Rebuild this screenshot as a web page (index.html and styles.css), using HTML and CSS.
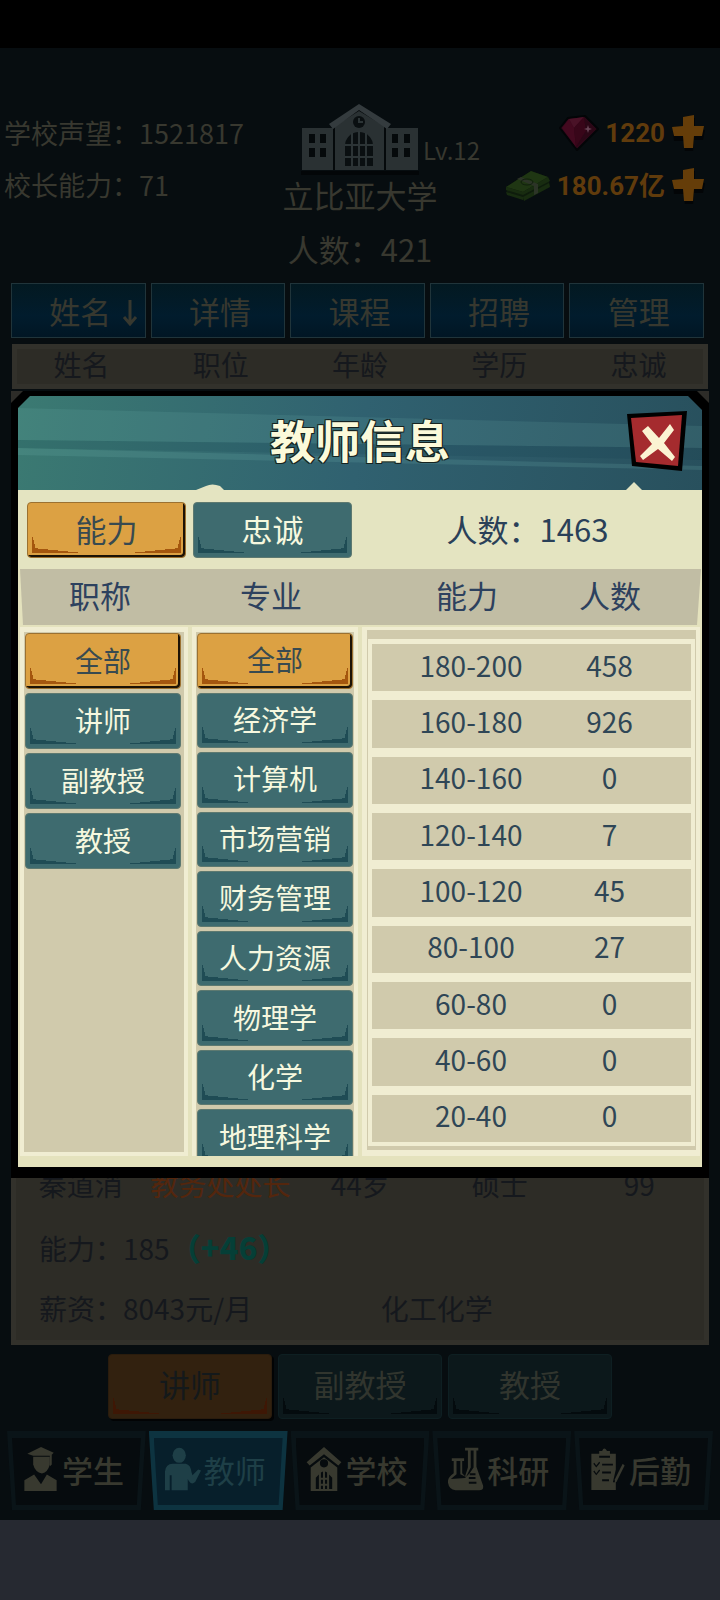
FILE: index.html
```html
<!DOCTYPE html>
<html lang="zh-CN">
<head>
    <meta charset="UTF-8">
    <meta name="viewport" content="width=device-width, initial-scale=1.0">
    <title>教师信息</title>
    <link rel="stylesheet" href="styles.css">
</head>
<body>

    <!-- shapes used more than once -->
    <svg class="defs" width="0" height="0" aria-hidden="true">
        <symbol id="plus" viewBox="0 0 34 36">
            <path d="M12 3l11-2 0 11 10 1-2 10-9 0-1 12-8 1-1-12-10 0-1-10 11-1z" fill="#030507" transform="translate(1 2)"/>
            <path d="M12 2l11-2 0 11 10 0-2 10-8 0-1 12-9 0-1-12-9 0-2-9 11-1z" fill="#653d09"/>
        </symbol>
    </svg>

    <div class="statusbar"></div>

    <div class="game">

        <header class="top">
            <div class="stats">
                <p>学校声望：1521817</p>
                <p>校长能力：71</p>
            </div>

            <div class="school">
                <svg class="building" viewBox="0 0 118 72">
                    <path d="M0 67h118v4H0z" fill="#030608"/>
                    <path d="M1 24h33v42H1zM84 24h33v42H84z" fill="#2a3133"/>
                    <path d="M32 20L58 3l27 17v46H32z" fill="#05090b"/>
                    <path d="M34 22L58 7l25 15v44H34z" fill="#2a3133"/>
                    <path d="M28 20L58 0l32 20-4 5L58 6 32 25z" fill="#343b3e"/>
                    <circle cx="58" cy="18" r="6" fill="#0a0f11"/>
                    <path d="M58 14v4h4" fill="none" stroke="#2c3436" stroke-width="2"/>
                    <path d="M44 62V42a14 14 0 0 1 28 0v20z" fill="#0a0f11"/>
                    <path d="M44 41h28M44 53h28M51 29v34M58 27v36M65 29v34" stroke="#2c3436" stroke-width="2"/>
                    <path d="M8 30h6v9H8zM19 30h6v9h-6zM8 44h6v9H8zM19 44h6v9h-6zM91 30h6v9h-6zM103 30h6v9h-6zM91 44h6v9h-6zM103 44h6v9h-6z" fill="#05090b"/>
                </svg>
                <span class="level">Lv.12</span>
                <h1>立比亚大学</h1>
            </div>

            <div class="money">
                <div class="money-row">
                    <svg class="gem" viewBox="0 0 40 36">
                        <path d="M1 13L9 3l17-2 13 13-21 21z" fill="#30081a" stroke="#030507" stroke-width="2"/>
                        <path d="M3 13l7-9 5 9zM15 13l2 19L3 13z" fill="#43091f"/>
                        <path d="M10 4l15-2-10 11z" fill="#4a1227"/>
                        <path d="M15 13l12 3-10 16zM25 2l2 14-12-3z" fill="#380619"/>
                        <path d="M27 16l10-2-20 18zM25 2l12 12-10 2z" fill="#2b0716"/>
                        <path d="M29 10l1 3 3 1-3 1-1 3-1-3-3-1 3-1z" fill="#684455"/>
                    </svg>
                    <span>1220</span>
                    <button class="add" aria-label="购买钻石"><svg viewBox="0 0 34 36"><use href="#plus"/></svg></button>
                </div>
                <div class="money-row">
                    <svg class="cash" viewBox="0 0 46 34">
                        <path d="M1 18L26 2l17 6 2 9-26 14L2 25z" fill="#0e1c0c"/>
                        <path d="M1 18L26 2l17 6-25 15z" fill="#1f3613"/>
                        <path d="M1 18l17 5v3L1 21zM1 23l17 5v3L2 26zM18 23L43 8l2 4-27 14zM18 28l26-14 1 4-26 14z" fill="#182c10"/>
                        <path d="M12 10l17 7v9l4-2v-9L16 8z" fill="#2c3427"/>
                        <ellipse cx="22" cy="13" rx="6" ry="3" fill="none" stroke="#101f0c"/>
                    </svg>
                    <span>180.67亿</span>
                    <button class="add" aria-label="购买资金"><svg viewBox="0 0 34 36"><use href="#plus"/></svg></button>
                </div>
            </div>
        </header>

        <p class="people">人数：421</p>

        <div class="tabs">
            <button>姓名<svg class="arrow" viewBox="0 0 16 28"><path d="M8 1v22M2 18l6 7 6-7" fill="none" stroke="currentColor" stroke-width="3"/></svg></button>
            <button>详情</button>
            <button>课程</button>
            <button>招聘</button>
            <button>管理</button>
        </div>

        <div class="list-head row">
            <span>姓名</span>
            <span>职位</span>
            <span>年龄</span>
            <span>学历</span>
            <span>忠诚</span>
        </div>

        <div class="dialog-wrap">
            <div class="dialog" role="dialog" aria-labelledby="dialog-title">

                <div class="dialog-head">
                    <svg class="stripes" viewBox="0 0 684 94" preserveAspectRatio="none">
                        <path d="M0 12L684 30v22L0 44z" fill="#7cc0b8" opacity=".13"/>
                        <path d="M0 44L684 52v12L0 52z" fill="#0c3044" opacity=".12"/>
                        <path d="M0 52L684 70v4L0 59z" fill="#7cc0b8" opacity=".16"/>
                        <path d="M178 94l10-4q6-3 14 0l4 4zM608 94l8-8 8 8z" fill="#e3e4c3"/>
                    </svg>
                    <h2 id="dialog-title">教师信息</h2>
                    <button class="close" aria-label="关闭">
                        <svg viewBox="0 0 62 62">
                            <path d="M1 3l60-3-5 60-50-5z" fill="#000"/>
                            <path d="M5 7l51-3-4 51-42-4z" fill="#a52b2e"/>
                            <path d="M16 20l6-5 11 12 11-14 4 6-10 13 11 14-3 4-14-12-15 11-3-4 12-12z" fill="#fbf3d2"/>
                        </svg>
                    </button>
                </div>

                <div class="switch">
                    <button class="btn active">能力</button>
                    <button class="btn">忠诚</button>
                    <p>人数：1463</p>
                </div>

                <div class="band">
                    <span>职称</span>
                    <span>专业</span>
                    <span>能力</span>
                    <span>人数</span>
                </div>

                <div class="panels">
                    <div class="panel">
                        <div class="options">
                            <button class="btn active">全部</button>
                            <button class="btn">讲师</button>
                            <button class="btn">副教授</button>
                            <button class="btn">教授</button>
                        </div>
                    </div>
                    <div class="panel">
                        <div class="options long">
                            <button class="btn active">全部</button>
                            <button class="btn">经济学</button>
                            <button class="btn">计算机</button>
                            <button class="btn">市场营销</button>
                            <button class="btn">财务管理</button>
                            <button class="btn">人力资源</button>
                            <button class="btn">物理学</button>
                            <button class="btn">化学</button>
                            <button class="btn">地理科学</button>
                        </div>
                    </div>
                    <div class="result">
                        <div class="result-frame">
                            <table aria-label="能力人数">
                                <tr><td>180-200</td><td>458</td></tr>
                                <tr><td>160-180</td><td>926</td></tr>
                                <tr><td>140-160</td><td>0</td></tr>
                                <tr><td>120-140</td><td>7</td></tr>
                                <tr><td>100-120</td><td>45</td></tr>
                                <tr><td>80-100</td><td>27</td></tr>
                                <tr><td>60-80</td><td>0</td></tr>
                                <tr><td>40-60</td><td>0</td></tr>
                                <tr><td>20-40</td><td>0</td></tr>
                            </table>
                        </div>
                    </div>
                </div>

            </div>
        </div>

        <div class="teacher">
            <div class="row">
                <span>秦道消</span>
                <span class="post">教务处处长</span>
                <span>44岁</span>
                <span>硕士</span>
                <span>99</span>
            </div>
            <p>能力：185<b>（+46）</b></p>
            <p class="pay"><span>薪资：8043元/月</span><span>化工化学</span></p>
        </div>

        <div class="ranks">
            <button class="btn active">讲师</button>
            <button class="btn">副教授</button>
            <button class="btn">教授</button>
        </div>

        <nav>
            <a href="#">
                <svg viewBox="0 0 36 46">
                    <path d="M18 0l13 6-2 2v10l-2 2V9H10l-6-2z"/>
                    <path d="M10 10h17v8q-2 8-8 9-7-1-9-9z"/>
                    <path d="M1 45V34l10-6 7 10 6-10 10 6v11z"/>
                </svg>学生
            </a>
            <a href="#" class="current">
                <svg viewBox="0 0 38 46">
                    <ellipse cx="15" cy="8" rx="7" ry="8"/>
                    <path d="M0 45V25q1-8 8-8h14q5 1 6 9l1 3 6-6 3 1-6 12q-4 4-7-1l-1-2v12H7V29H5v16z"/>
                </svg>教师
            </a>
            <a href="#">
                <svg viewBox="0 0 34 44">
                    <path d="M17 0l17 15-3 3-14-11L3 18l-3-3z"/>
                    <path fill-rule="evenodd" d="M4 20L17 10l13 10v23H4zM17 12a4 4 0 1 0 0 8 4 4 0 0 0 0-8zM9 30v11h3V27zM14 25v5h2v-6zM18 24v6h2v-5zM22 27v14h3V30zM14 32v4h2v-4zM18 32v4h2v-4zM14 38v3h2v-3zM18 38v3h2v-3z"/>
                </svg>学校
            </a>
            <a href="#">
                <svg viewBox="0 0 38 46">
                    <path fill-rule="evenodd" d="M18 0h14v3h-2v17l7 20q1 5-4 5H8q-7-1-8-8-1-5 6-10V14H4v-3h13v3h-2v13l3 3 3-9V3h-3zM24 3v18l-5 10-6-3V14H9v14l-6 5 15-1q5-4 9-11V3zM23 27v2h6v-2zM22 31v2h7v-2zM22 36v2h8v-2z"/>
                </svg>科研
            </a>
            <a href="#">
                <svg viewBox="0 0 36 46">
                    <path fill-rule="evenodd" d="M1 7h8V4h3q2-5 5 0h3v3h6v16l-3 13h3v8H1zM9 9v2h11V9zM12 17v2h11v-2zM12 25v2h9v-2zM12 33v2h7v-2zM3 17l3 4 4-5-1-1-3 4-2-3zM3 25l3 4 4-5-1-1-3 4-2-3z"/>
                    <path d="M33 17l2 2-8 16-2 2v-4z"/>
                </svg>后勤
            </a>
        </nav>

    </div>

</body>
</html>
```

FILE: styles.css
```css
* {
    margin: 0;
    padding: 0;
    box-sizing: border-box;
}
body {
    min-height: 100vh;
    background-color: #262931;
    font-family: "Noto Sans CJK SC", sans-serif;
    font-size: 28px;
    color: #38382f;
}
button {
    border: none;
    background: none;
    font: inherit;
    color: inherit;
    cursor: pointer;
}
svg {
    display: block;
}
.defs {
    position: absolute;
}
.statusbar {
    height: 48px;
    background-color: #000;
}
.game {
    padding-bottom: 10px;
    background-color: #070d10;
}

/* school header */
.top {
    display: grid;
    grid-template-columns: 1fr 160px 1fr;
    height: 174px;
    padding-top: 56px;
}
.stats {
    padding: 3px 0 0 4px;
    font-size: 27px;
    line-height: 52px;
    white-space: nowrap;
}
.school {
    position: relative;
    display: flex;
    flex-direction: column;
    align-items: center;
}
.building {
    width: 118px;
    height: 72px;
}
.level {
    position: absolute;
    left: 143px;
    top: 30px;
    font-size: 24px;
    line-height: 32px;
}
.school h1 {
    font-size: 31px;
    font-weight: 400;
    line-height: 38px;
}
.money {
    padding: 2px 15px 0 0;
    font-family: Roboto, "Noto Sans CJK SC", sans-serif;
    font-size: 26px;
    font-weight: 700;
    line-height: 52px;
    color: #603b0c;
}
.money-row {
    display: flex;
    align-items: center;
    justify-content: flex-end;
    gap: 6px;
    height: 53px;
}
.gem {
    width: 40px;
    height: 36px;
}
.cash {
    width: 46px;
    height: 34px;
}
.add svg {
    width: 34px;
    height: 36px;
}
.people {
    height: 61px;
    font-size: 31px;
    line-height: 54px;
    text-align: center;
}

/* list behind the dialog */
.tabs {
    display: flex;
    gap: 5px;
    margin: 0 16px 6px 11px;
}
.tabs button {
    position: relative;
    flex: 1;
    height: 55px;
    padding-left: 4px;
    border: 1px solid #20343a;
    background-image: linear-gradient(#031921, #011c2d 60%, #011624);
    font-size: 31px;
    line-height: 52px;
    color: #37382f;
}
.arrow {
    position: absolute;
    right: 7px;
    top: 15px;
    width: 16px;
    height: 28px;
}
.row {
    display: grid;
    grid-template-columns: repeat(5, 1fr);
    text-align: center;
    white-space: nowrap;
}
.list-head,
.teacher {
    background-color: #2d2c26;
    box-shadow: inset 0 0 0 5px #32312b;
    color: #15181d;
}
.list-head {
    height: 45px;
    margin: 0 12px;
    line-height: 41px;
}

/* first line of the card slides under the dialog */
.teacher {
    margin: -16px 11px 0;
    padding-bottom: 7px;
    line-height: 60px;
}
.teacher .row {
    padding-top: 2px;
    line-height: 40px;
    margin-bottom: 13px;
}
.teacher .post {
    color: #54260d;
}
.teacher p {
    padding-left: 28px;
}
.teacher b {
    font-size: 31px;
    font-weight: 900;
    color: #053f37;
}
.pay {
    display: grid;
    grid-template-columns: 51% 49%;
}

/* buttons */
.btn {
    --face: #3e6b6f;
    --mark: #1f4c55;
    height: 56px;
    padding-bottom: 3px;
    border: 1px solid #5d7970;
    border-radius: 4px;
    background:
        linear-gradient(to top right, var(--mark) 50%, transparent 50%) 5px calc(100% - 4px) / 50px 5px no-repeat,
        linear-gradient(to top left, var(--mark) 50%, transparent 50%) calc(100% - 5px) calc(100% - 4px) / 50px 5px no-repeat,
        linear-gradient(to top right, var(--mark) 50%, transparent 50%) 4px calc(100% - 4px) / 5px 18px no-repeat,
        linear-gradient(to top left, var(--mark) 50%, transparent 50%) calc(100% - 4px) calc(100% - 4px) / 5px 18px no-repeat,
        var(--face);
    line-height: 50px;
    color: #f6f8df;
}
.btn.active {
    --face: #dca143;
    --mark: #a4560e;
    border-color: #9b7131;
    box-shadow: inset -2px -2px #1c1205;
    color: #384a50;
}

/* dialog */
.dialog-wrap {
    position: relative;
    z-index: 1;
    margin: 2px 11px 0;
    background-color: #2d2c28;
}
.dialog {
    padding: 5px 7px 11px;
    background-color: #000;
    clip-path: polygon(12px 0, calc(100% - 12px) 0, 100% 12px, 100% 100%, 0 100%, 0 12px);
}
.dialog-head {
    position: relative;
    display: flex;
    align-items: center;
    justify-content: center;
    height: 94px;
    padding-bottom: 6px;
    background-image: linear-gradient(100deg, #3b7a72, #306170 50%, #28505d);
    clip-path: polygon(12px 0, calc(100% - 14px) 0, 100% 14px, 100% 100%, 0 100%, 0 12px);
}
.stripes {
    position: absolute;
    inset: 0;
    width: 100%;
    height: 100%;
}
.dialog-head h2 {
    position: relative;
    font-size: 45px;
    font-weight: 700;
    line-height: 60px;
    color: #fbfada;
    text-shadow: 1px 1px #16231f, -1px 1px #16231f, 1px -1px #16231f, -1px -1px #16231f;
}
.close {
    position: absolute;
    right: 14px;
    top: 15px;
}
.close svg {
    width: 62px;
    height: 62px;
}
.switch {
    display: grid;
    grid-template-columns: 159px 159px 1fr;
    gap: 7px;
    padding: 12px 6px 11px 9px;
    background-color: #e4e4c1;
    font-size: 31px;
    color: #2a4058;
}
.switch p {
    line-height: 54px;
    text-align: center;
}
.band {
    position: relative;
    z-index: 0;
    display: grid;
    grid-template-columns: 164px 178px 214px 1fr;
    height: 56px;
    padding-right: 56px;
    background-color: #e4e2bd;
    font-size: 31px;
    line-height: 52px;
    text-align: center;
    color: #2d415e;
}
.band::before {
    content: "";
    position: absolute;
    z-index: -1;
    inset: 0;
    background-color: #c1bda4;
    clip-path: polygon(2px 0, calc(100% - 1px) 0, calc(100% - 5px) 100%, 5px 100%);
}
.panels {
    display: grid;
    grid-template-columns: 168px 166px 1fr;
    gap: 4px;
    padding: 2px 2px 11px;
    background-color: #e4e2bd;
}
.panel {
    height: 529px;
    padding: 5px 4px 4px;
    background-color: #f0edd2;
    overflow: hidden;
}
.options {
    display: grid;
    grid-auto-rows: 56px;
    gap: 4px;
    height: 520px;
    padding: 1px;
    background-color: #d0caac;
}
.options.long {
    grid-auto-rows: 1fr;
    height: 534px;
}
.options .btn {
    width: 156px;
    height: auto;
}
.result {
    padding: 3px 4px 6px 5px;
    background-color: #f0edd2;
}
.result-frame {
    padding: 9px 1px 4px;
    background-color: #d0caac;
}
.result table {
    width: 100%;
    height: 507px;
    padding: 0 4px;
    border-spacing: 0;
    background-color: #f0edd2;
    color: #2f4656;
}
.result td {
    padding-bottom: 6px;
    border-top: 5px solid #f0edd2;
    border-bottom: 4px solid #f0edd2;
    background-color: #d0caac;
    line-height: 40px;
    text-align: center;
}
.result td:first-child {
    width: 198px;
}
.result td:last-child {
    padding-right: 42px;
}

/* rank filter and bottom menu */
.ranks {
    display: grid;
    grid-template-columns: repeat(3, 164px);
    justify-content: center;
    gap: 6px;
    padding: 9px 0 12px;
    font-size: 31px;
}
.ranks .btn {
    --face: #0c181b;
    --mark: #040b0e;
    height: 65px;
    padding-bottom: 6px;
    border-color: #0e1f22;
    color: #31352e;
}
.ranks .btn.active {
    --face: #32210f;
    --mark: #3e1705;
    border-color: #2a1c0d;
    box-shadow: 2px 2px #020304;
    color: #14191b;
}
nav {
    display: grid;
    grid-template-columns: repeat(5, 1fr);
    gap: 3px;
    margin: 0 7px;
}
nav a {
    position: relative;
    z-index: 0;
    display: flex;
    align-items: center;
    justify-content: center;
    gap: 3px;
    height: 79px;
    padding: 0 6px 3px 0;
    background-color: #0a1418;
    clip-path: polygon(0 0, 100% 0, calc(100% - 5px) 100%, 5px 100%);
    font-size: 31px;
    font-weight: 500;
    text-decoration: none;
    white-space: nowrap;
    color: #38392f;
}
nav a::before {
    content: "";
    position: absolute;
    z-index: -1;
    inset: 7px 5px 5px;
    background-color: #060b0e;
    clip-path: polygon(0 0, 100% 0, calc(100% - 4px) 100%, 4px 100%);
}
nav svg {
    width: 36px;
    height: 45px;
    fill: currentColor;
}
nav .current {
    background-color: #0d3340;
    font-weight: 400;
    color: #1e3f47;
}
nav .current::before {
    background-color: #071f2b;
}
```
